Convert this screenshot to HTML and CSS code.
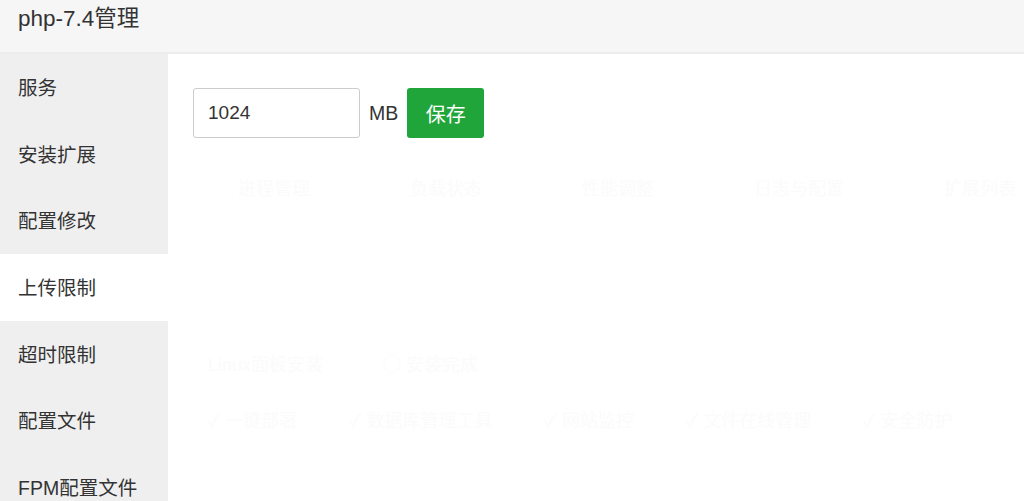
FILE: index.html
```html
<!DOCTYPE html>
<html lang="zh-CN">
<head>
  <meta charset="UTF-8">
  <title>php-7.4管理</title>
  <link rel="stylesheet" href="styles.css">
</head>
<body>

  <div class="layer">
    <div class="layer-title">php-7.4管理</div>

    <div class="layer-body">
      <ul class="side-menu">
        <li>服务</li>
        <li>安装扩展</li>
        <li>配置修改</li>
        <li class="active">上传限制</li>
        <li>超时限制</li>
        <li>配置文件</li>
        <li>FPM配置文件</li>
      </ul>

      <div class="main">
        <div class="upload-row">
          <input type="text" class="num-input" value="1024">
          <span class="unit">MB</span>
          <button class="btn-save">保存</button>
        </div>

        <div class="ghost ghost-top">
          <span>进程管理</span>
          <span>负载状态</span>
          <span>性能调整</span>
          <span>日志与配置</span>
          <span>扩展列表</span>
        </div>

        <div class="ghost ghost-mid">
          <span>Linux面板安装</span>
          <span>◯ 安装完成</span>
        </div>

        <div class="ghost ghost-low">
          <span>✓ 一键部署</span>
          <span>✓ 数据库管理工具</span>
          <span>✓ 网站监控</span>
          <span>✓ 文件在线管理</span>
          <span>✓ 安全防护</span>
        </div>
      </div>
    </div>
  </div>

</body>
</html>
```

FILE: styles.css
```css
* {
  box-sizing: border-box;
}

body {
  margin: 0;
  font-family: "Liberation Sans", Arial, "Noto Sans CJK SC", sans-serif;
  background: #fff;
  color: #333;
}

.layer {
  width: 1024px;
  height: 501px;
  overflow: hidden;
  display: flex;
  flex-direction: column;
}

.layer-title {
  height: 54px;
  flex-shrink: 0;
  background: #f6f6f6;
  border-bottom: 2px solid #ededed;
  padding: 0 18px;
  font-size: 22.5px;
  line-height: 38px;
  color: #333;
}

.layer-body {
  flex: 1;
  display: flex;
}

.side-menu {
  list-style: none;
  margin: 0;
  padding: 0;
  width: 168px;
  flex-shrink: 0;
  background: #efeff0;
}

.side-menu li {
  height: 66.7px;
  line-height: 68px;
  padding-left: 18px;
  font-size: 19.5px;
  color: #333;
  white-space: nowrap;
  overflow: hidden;
}

.side-menu li.active {
  background: #fff;
}

.main {
  flex: 1;
  padding: 34px 25px;
}

.upload-row {
  display: flex;
  align-items: center;
}

.num-input {
  width: 167px;
  height: 50px;
  border: 1px solid #ccc;
  border-radius: 3px;
  padding: 0 14px;
  font-family: inherit;
  font-size: 19px;
  color: #333;
  outline: none;
}

.unit {
  margin: 0 9px 0 9px;
  font-size: 19.5px;
  color: #333;
}

.btn-save {
  width: 77px;
  height: 50px;
  border: none;
  border-radius: 3px;
  background: #20a53a;
  color: #fff;
  font-family: inherit;
  font-size: 20px;
  cursor: pointer;
}

.ghost {
  display: flex;
  color: #fbfbfb;
  font-size: 18px;
  white-space: nowrap;
}

.ghost-top {
  margin-top: 36px;
  padding-left: 45px;
  gap: 100px;
}

.ghost-mid {
  margin-top: 150px;
  padding-left: 15px;
  gap: 60px;
}

.ghost-low {
  margin-top: 30px;
  padding-left: 15px;
  gap: 52px;
}
```
